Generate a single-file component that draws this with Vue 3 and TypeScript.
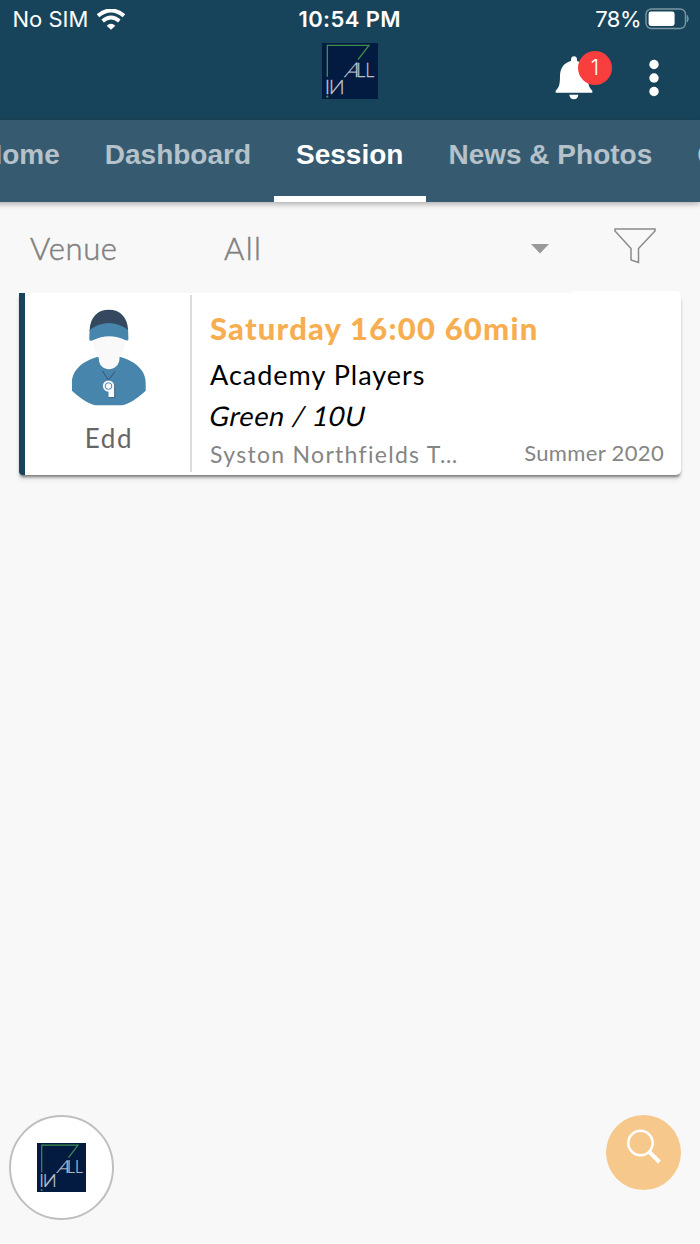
<script setup lang="ts">
interface Tab {
  label: string
  active?: boolean
}

interface Session {
  coach: string
  slot: string
  group: string
  level: string
  venue: string
  term: string
}

const tabs: Tab[] = [
  { label: 'Home' },
  { label: 'Dashboard' },
  { label: 'Session', active: true },
  { label: 'News & Photos' },
  { label: 'Chat' },
]

const session: Session = {
  coach: 'Edd',
  slot: 'Saturday 16:00 60min',
  group: 'Academy Players',
  level: 'Green / 10U',
  venue: 'Syston Northfields T…',
  term: 'Summer 2020',
}
</script>

<template>
  <div class="screen">
    <svg class="defs" width="0" height="0" aria-hidden="true">
      <symbol id="club-logo" viewBox="0 0 168 168">
        <rect width="168" height="168" fill="#031b40" />
        <path d="M16 101V7H141L108 50" fill="none" stroke="#3f8f4c" stroke-width="4" />
        <text class="mark" font-size="61" textLength="41" lengthAdjust="spacingAndGlyphs" transform="translate(65 102) skewX(-23)">A</text>
        <text x="103" y="102" class="mark" font-size="61" textLength="54" lengthAdjust="spacingAndGlyphs">LL</text>
        <text x="8" y="152" class="mark" font-size="58" textLength="16" lengthAdjust="spacingAndGlyphs">I</text>
        <text class="mark" font-size="58" textLength="48" lengthAdjust="spacingAndGlyphs" transform="translate(68 152) scale(-1 1)">N</text>
        <circle cx="16" cy="161" r="3.4" fill="#3fa04c" />
      </symbol>
    </svg>

    <header class="header">
      <div class="status">
        <div class="carrier">
          <span class="sim">No SIM</span>
          <svg class="wifi" width="28" height="21" viewBox="0 0 84 63">
            <path d="M3 20Q42 -11 81 20" fill="none" stroke="#fff" stroke-width="12" />
            <path d="M17 36Q42 15 67 36" fill="none" stroke="#fff" stroke-width="11" />
            <path d="M29 50Q42 38 55 50L42 62Z" fill="#fff" />
          </svg>
        </div>
        <span class="clock">10:54 PM</span>
        <div class="power">
          <span class="percent">78%</span>
          <svg width="44" height="22" viewBox="0 0 44 22">
            <rect x="1" y="1" width="39.5" height="19.5" rx="5.5" fill="none" stroke="#7c96a3" stroke-width="1.4" />
            <rect x="3.6" y="3.6" width="26" height="14.3" rx="2.4" fill="#fff" />
            <path d="M42.3 7.5Q44.2 10.8 42.3 14Z" fill="#7c96a3" stroke="#7c96a3" />
          </svg>
        </div>
      </div>
      <div class="appbar">
        <svg class="logo" width="56" height="56"><use href="#club-logo" /></svg>
        <div class="actions">
          <div class="bell">
            <svg width="38" height="44" viewBox="0 0 114 132">
              <path d="M57 1C51 1 48 5 48 11V15C28 20 15 36 15 60C15 86 12 95 2 104V110H112V104C102 95 99 86 99 60C99 36 86 20 66 15V11C66 5 63 1 57 1Z" fill="#fff" />
              <path d="M43 116H70C69 125 64 130 56.500 130S44 125 43 116Z" fill="#fff" />
            </svg>
            <span class="count">1</span>
          </div>
          <svg class="dots" width="12" height="38" viewBox="0 0 12 38" fill="#fff">
            <circle cx="6" cy="5.500" r="4.700" />
            <circle cx="6" cy="19" r="4.700" />
            <circle cx="6" cy="32.500" r="4.700" />
          </svg>
        </div>
      </div>
    </header>

    <nav class="tabs">
      <div v-for="tab in tabs" :key="tab.label" class="tab" :class="{ active: tab.active }">{{ tab.label }}</div>
    </nav>

    <main class="content">
      <div class="filters">
        <span class="name">Venue</span>
        <div class="select">
          <span class="value">All</span>
          <svg class="caret" width="18" height="10" viewBox="0 0 18 10"><path d="M0 0H18L9 9.500Z" fill="#999" /></svg>
        </div>
        <svg class="funnel" width="42" height="36" viewBox="0 0 42 36">
          <path d="M1 1H41V3L24.500 20.500V34.500L17 32V20.500L1 3Z" fill="none" stroke="#8a8a8a" stroke-width="1.500" />
        </svg>
      </div>

      <article class="card">
        <div class="coach">
          <svg width="76" height="97" viewBox="185 70 227 292">
            <path d="M248 150V165C252 190 260 207 271 216V262H327V216C339 207 346 190 347 165V150Z" fill="#f9f9f9" />
            <path d="M266 214C220 226 187 254 187 292V316Q235 360 265 360H331Q361 360 409 316V292C409 254 376 226 330 214V220C328 262 268 262 268 220Z" fill="#4785ad" />
            <path d="M240 136C241 94 264 72 298 72S355 94 356 136Z" fill="#34495f" />
            <path d="M240 133Q298 92 356 133L357 162Q355 167 349 164Q298 139 248 165Q239 168 239 160Z" fill="#4785ad" />
            <path d="M279 257L297 284L317 257" fill="none" stroke="#34495f" stroke-width="2.500" />
            <path d="M298 298H317V337H298Z" fill="#34495f" opacity=".6" />
            <path d="M297 298H314V335H297Z" fill="#f7f9fb" />
            <circle cx="297" cy="302" r="17" fill="#f7f9fb" />
            <circle cx="297" cy="302" r="10" fill="none" stroke="#4785ad" stroke-width="3" />
          </svg>
          <span class="coach-name">{{ session.coach }}</span>
        </div>
        <div class="details">
          <div class="slot"><span>{{ session.slot }}</span></div>
          <div class="group"><span>{{ session.group }}</span></div>
          <div class="level"><span>{{ session.level }}</span></div>
          <div class="foot">
            <span class="venue">{{ session.venue }}</span>
            <span class="term">{{ session.term }}</span>
          </div>
        </div>
      </article>
    </main>

    <footer class="floating">
      <div class="club">
        <svg width="49" height="49"><use href="#club-logo" /></svg>
      </div>
      <div class="search">
        <svg width="36" height="36" viewBox="0 0 36 36" fill="none" stroke="#fff">
          <circle cx="14.500" cy="14" r="12.200" stroke-width="2.500" />
          <path d="M22.800 22.500L33.500 33" stroke-width="4" />
        </svg>
      </div>
    </footer>
  </div>
</template>

<style>
body {
  margin: 0;
  background: #f8f8f8;
}
</style>

<style scoped>
.screen {
  display: flex;
  flex-direction: column;
  width: 700px;
  height: 1244px;
  overflow: hidden;
  background: #f8f8f8;
  font-family: Lato, "Open Sans", sans-serif;
  white-space: nowrap;
}

.screen svg {
  display: block;
  flex: none;
}

.screen svg.defs {
  position: absolute;
}

.mark {
  font-family: Lato, sans-serif;
  font-weight: 300;
  fill: #c3c8d3;
  stroke: #c3c8d3;
  stroke-width: 0.8px;
}

.header {
  height: 120px;
  flex: none;
  background: #18445b;
  color: #fff;
}

.status {
  display: grid;
  grid-template-columns: 1fr auto 1fr;
  align-items: center;
  height: 38px;
  box-sizing: border-box;
  padding: 0 11px 0 12.5px;
  font: 400 22px/38px Inter, sans-serif;
}

.carrier,
.power {
  display: flex;
  align-items: center;
}

.carrier {
  gap: 9px;
}

.clock {
  margin-right: 2px;
  font-weight: 600;
  letter-spacing: 0.4px;
}

.power {
  justify-content: flex-end;
  gap: 4px;
}

.percent {
  letter-spacing: -0.5px;
}

.appbar {
  display: grid;
  grid-template-columns: 1fr auto 1fr;
  padding: 5px 40px 0;
}

.logo {
  grid-column: 2;
}

.actions {
  display: flex;
  justify-content: flex-end;
  align-items: flex-start;
  gap: 55px;
  padding-top: 13px;
}

.bell {
  position: relative;
}

.count {
  position: absolute;
  left: 23px;
  top: -5px;
  width: 34px;
  height: 34px;
  border-radius: 50%;
  background: #f93e3e;
  font: 300 21px/33px Inter, sans-serif;
  text-align: center;
}

.dots {
  margin-top: 3px;
}

.tabs {
  position: relative;
  display: flex;
  flex: none;
  height: 82px;
  margin-left: -40.5px;
  background: #365b70;
  box-shadow: 0 2px 6px rgba(0, 0, 0, 0.32);
}

.tab {
  box-sizing: border-box;
  flex: none;
  height: 82px;
  padding: 0 22.5px;
  border-bottom: 6px solid transparent;
  color: #b6c2cb;
  font: 700 28px/70px "Liberation Sans", Arial, sans-serif;
}

.tab.active {
  color: #fff;
  border-bottom-color: #fff;
}

.content {
  padding: 0 19px;
}

.filters {
  display: flex;
  align-items: center;
  height: 91px;
  box-sizing: border-box;
  padding: 0 25px 0 11px;
  color: #808080;
  font-size: 31px;
  font-weight: 300;
  -webkit-text-stroke: 0.5px #808080;
}

.name {
  width: 194px;
  letter-spacing: 0.6px;
}

.select {
  display: flex;
  align-items: center;
  justify-content: space-between;
  width: 325px;
}

.value {
  letter-spacing: 1.5px;
}

.caret {
  margin-top: 2px;
}

.funnel {
  margin: -4px 0 0 auto;
}

.card {
  position: relative;
  display: flex;
  height: 182px;
  box-sizing: border-box;
  border-left: 6px solid #18445b;
  border-radius: 0 5px 5px 4px;
  background: #fff;
  box-shadow: 0 3px 3px -1px rgba(0, 0, 0, 0.48), 0 5px 5px rgba(0, 0, 0, 0.08);
}

.card::before {
  content: "";
  position: absolute;
  top: -2px;
  right: 0;
  width: 108px;
  height: 8px;
  border-top-right-radius: 5px;
  background: #fff;
}

.coach {
  display: flex;
  flex-direction: column;
  align-items: center;
  box-sizing: border-box;
  width: 167px;
  height: 177px;
  margin-top: 2px;
  padding: 14px 0 0 3px;
  border-right: 2px solid #dcdcdc;
}

.coach-name {
  margin-top: 16px;
  color: #666;
  font-size: 26px;
  line-height: 32px;
  letter-spacing: 1.6px;
}

.details {
  flex: 1;
  padding: 12px 17px 0 18px;
}

.slot {
  color: #f7ae51;
  font-size: 31px;
  font-weight: 900;
  line-height: 47px;
  letter-spacing: 1.2px;
}

.group {
  color: #000;
  font-size: 27px;
  line-height: 45px;
  letter-spacing: 1px;
}

.level {
  color: #000;
  font-size: 27px;
  line-height: 38px;
  letter-spacing: 0.6px;
}

.level span {
  display: inline-block;
  transform: skewX(-12deg);
}

.foot {
  display: flex;
  justify-content: space-between;
  color: #858585;
  font-size: 23px;
  line-height: 38px;
}

.venue {
  letter-spacing: 1.3px;
}

.term {
  font-size: 22px;
  line-height: 35px;
  letter-spacing: 0.35px;
}

.floating {
  display: flex;
  justify-content: space-between;
  align-items: flex-start;
  margin-top: auto;
  padding: 0 19px 24px 9px;
}

.club,
.search {
  display: flex;
  justify-content: center;
  box-sizing: border-box;
  border-radius: 50%;
}

.club {
  align-items: center;
  width: 105px;
  height: 105px;
  border: 2px solid #bfbfbf;
  background: #fff;
}

.search {
  width: 75px;
  height: 75px;
  padding-top: 14px;
  background: #f7c88b;
}
</style>
